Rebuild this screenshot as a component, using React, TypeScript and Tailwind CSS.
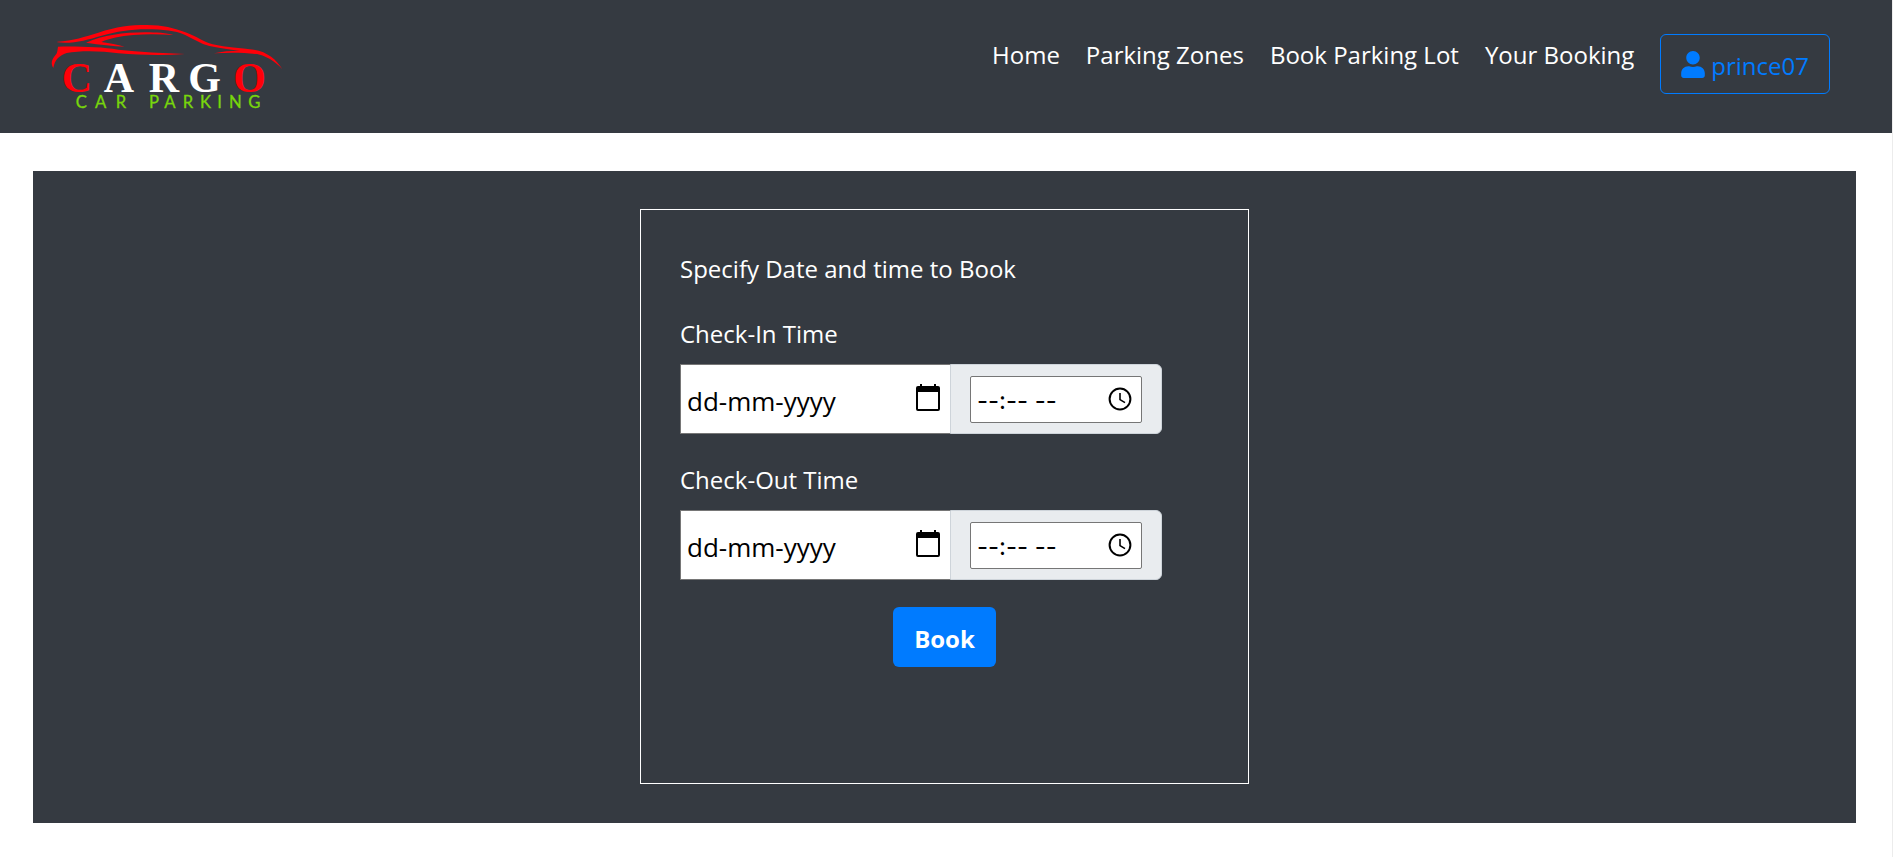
import React from "react";
import { FaUser } from "react-icons/fa";

function Logo() {
  return (
    <svg
      viewBox="60 60 702 285"
      className="h-[95px] w-[234px]"
      role="img"
      aria-label="Cargo Car Parking"
    >
      <g fill="#ff0009">
        <path d="M82 125 C130 122 165 110 205 98 C260 80 300 75 350 75 C400 75 430 84 470 98 C500 109 520 125 548 133 C590 142 630 145 672 149 C712 155 741 180 757 208 C735 184 708 167 672 160 C630 152 580 147 538 138 C512 131 490 116 464 104 C435 92 400 88 350 88 C300 88 260 95 215 107 C170 120 130 132 82 127 Z" />
        <path d="M168 128 C220 106 280 97 345 97 C380 97 410 99 430 105 C390 103 350 102 310 105 C270 109 240 114 214 126 C240 130 262 134 284 140 C250 138 210 134 168 128 Z" />
        <path d="M84 140 C150 139 215 141 265 149 C330 156 400 159 465 162 C400 167 330 165 265 160 C215 152 150 151 110 159 C88 166 74 180 70 204 C61 190 66 178 76 166 C84 156 82 150 84 140 Z" />
        <path d="M552 160 C590 151 630 151 680 154 L690 163 C640 157 600 157 552 160 Z" />
      </g>
      <g
        fontFamily="'Liberation Serif', serif"
        fontSize="126"
        fontWeight="700"
        textAnchor="middle"
      >
        <text x="141" y="275" fill="#ff0009">C</text>
        <text x="267" y="275" fill="#ffffff">A</text>
        <text x="402" y="275" fill="#ffffff">R</text>
        <text x="524" y="275" fill="#ffffff">G</text>
        <text x="659" y="275" fill="#ff0009">O</text>
      </g>
      <text
        x="137 195 257 300 357 403 458 510 562 597 655"
        y="323"
        fill="#78d60c"
        stroke="#78d60c"
        strokeWidth="1"
        fontFamily="Lato, sans-serif"
        fontSize="50"
      >
        CAR PARKING
      </text>
    </svg>
  );
}

function CalendarIcon() {
  return (
    <svg viewBox="0 0 24 27" className="h-[27px] w-6" aria-hidden="true">
      <path
        fillRule="evenodd"
        d="M4 0h2v2h12V0h2v2h2a2 2 0 0 1 2 2v21a2 2 0 0 1-2 2H2a2 2 0 0 1-2-2V4a2 2 0 0 1 2-2h2zM2 8v17h20V8z"
      />
    </svg>
  );
}

function ClockIcon() {
  return (
    <svg
      viewBox="0 0 24 24"
      className="size-6"
      fill="none"
      stroke="#000"
      strokeWidth="2"
      aria-hidden="true"
    >
      <circle cx="12" cy="12" r="10.4" />
      <path d="M12 6v6.6l5 3" strokeWidth="1.6" />
    </svg>
  );
}

function DateTimeField({ id, label }: { id: string; label: string }) {
  return (
    <div>
      <label htmlFor={`${id}-date`} className="mb-[11px] block">
        {label}
      </label>
      <div className="flex h-[70px] max-w-[482px] text-black">
        <div className="flex flex-1 items-center border border-r-0 border-[#767676] bg-white pr-[10px] pl-[6px]">
          <input
            id={`${id}-date`}
            type="text"
            placeholder="dd-mm-yyyy"
            className="w-0 flex-1 pt-1 text-[26px] outline-none placeholder:text-black"
          />
          <button type="button" aria-label={`${label} calendar`} className="mb-1">
            <CalendarIcon />
          </button>
        </div>
        <div className="flex w-[212px] items-center rounded-r-md border border-[#ced4da] bg-[#e9ecef] px-[19px]">
          <div className="flex h-[47px] w-full items-center rounded-xs border border-[#767676] bg-white pr-[9px] pl-[6px]">
            <input
              id={`${id}-time`}
              type="text"
              aria-label={`${label} hour`}
              placeholder="--:-- --"
              className="w-0 flex-1 pt-1 font-[Inter,sans-serif] outline-none placeholder:text-black"
            />
            <button type="button" aria-label={`${label} clock`}>
              <ClockIcon />
            </button>
          </div>
        </div>
      </div>
    </div>
  );
}

const links = ["Home", "Parking Zones", "Book Parking Lot", "Your Booking"];

export default function App() {
  return (
    <div className="min-h-screen border-r border-[#ececec] bg-white font-['Open_Sans',sans-serif] text-[24px] leading-[38px] text-white">
      <header className="flex h-[133px] items-start justify-between bg-[#353a41] pr-[62px] pl-[50px]">
        <a href="#home" className="mt-5">
          <Logo />
        </a>
        <nav className="mt-[34px] flex items-start gap-[26px]">
          {links.map((link) => (
            <a key={link} href="#" className="pt-[2px]">
              {link}
            </a>
          ))}
          <button
            type="button"
            className="flex h-[60px] items-center gap-[6px] rounded-md border border-[#007bff] px-5 text-[#007bff]"
          >
            <FaUser className="h-[27px] w-6" />
            <span className="pt-1">prince07</span>
          </button>
        </nav>
      </header>
      <main className="mt-[38px] mr-9 ml-[33px] flex justify-center bg-[#353a41] pt-[38px] pb-[39px]">
        <form className="flex min-h-[575px] w-[609px] flex-col gap-[27px] border border-white px-[39px] pt-10">
          <p>Specify Date and time to Book</p>
          <DateTimeField id="check-in" label="Check-In Time" />
          <DateTimeField id="check-out" label="Check-Out Time" />
          <button
            type="button"
            className="h-[60px] self-center rounded-md bg-[#007bff] px-[21px] pt-1 font-bold"
          >
            Book
          </button>
        </form>
      </main>
    </div>
  );
}
